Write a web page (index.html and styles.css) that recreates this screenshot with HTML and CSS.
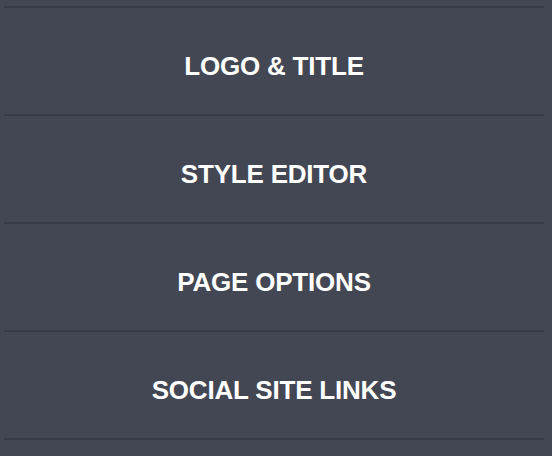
FILE: index.html
```html
<!DOCTYPE html>
<html lang="en">
<head>
    <meta charset="UTF-8">
    <meta name="viewport" content="width=device-width, initial-scale=1.0">
    <title>Settings Menu</title>
    <link rel="stylesheet" href="styles.css">
</head>
<body>
    <ul class="menu">
        <li class="menu-item">Logo &amp; Title</li>
        <li class="menu-item">Style Editor</li>
        <li class="menu-item">Page Options</li>
        <li class="menu-item">Social Site Links</li>
    </ul>
</body>
</html>
```

FILE: styles.css
```css
body {
    font-family: 'Liberation Sans', Arial, sans-serif;
    background-color: #434753;
    color: #ffffff;
    margin: 0;
    padding: 6px 8px 0 4px;
}
.menu {
    list-style: none;
    margin: 0;
    padding: 0;
    border-bottom: 2px solid #383b46;
}
.menu-item {
    border-top: 2px solid #383b46;
    padding: 43px 0 33px;
    font-size: 26px;
    line-height: 30px;
    font-weight: bold;
    text-transform: uppercase;
    text-align: center;
    letter-spacing: -0.2px;
    cursor: pointer;
}
```
